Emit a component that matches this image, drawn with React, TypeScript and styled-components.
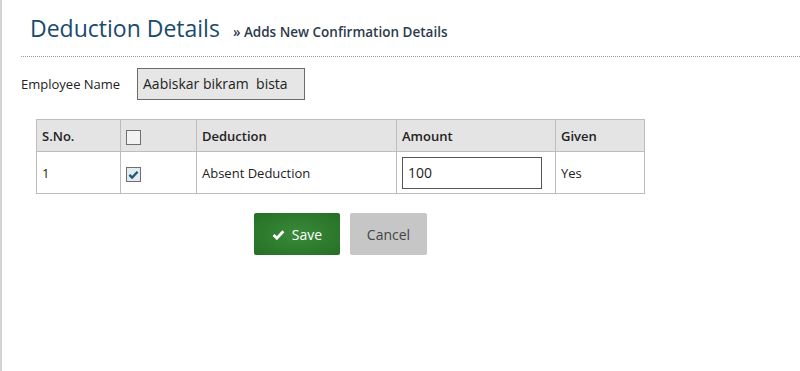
import React from "react";
import styled, { createGlobalStyle } from "styled-components";

const Global = createGlobalStyle`
  html, body { margin: 0; padding: 0; background: #fff; }
  body { font-family: "Open Sans", "Liberation Sans", sans-serif; color: #222; }
`;

const Page = styled.div`
  width: 800px;
  height: 371px;
  box-sizing: border-box;
  border-left: 2px solid #d4d4d4;
  padding: 13px 0 0 19px;
  overflow: hidden;
`;

const Header = styled.div`
  display: flex;
  align-items: baseline;
  gap: 13px;
  padding-left: 9px;
  height: 30px;
`;

const Title = styled.h1`
  margin: 0;
  font-size: 23px;
  font-weight: 400;
  color: #184b6e;
  line-height: 30px;
`;

const Sub = styled.span`
  font-size: 13.5px;
  font-weight: 600;
  color: #2d3a4b;
`;

const Divider = styled.div`
  margin-top: 13px;
  border-top: 1px dotted #9a9a9a;
`;

const FieldRow = styled.div`
  display: flex;
  align-items: center;
  margin-top: 11px;
`;

const Label = styled.label`
  font-size: 13px;
  width: 116px;
  color: #222;
`;

const NameBox = styled.div`
  width: 168px;
  height: 32px;
  box-sizing: border-box;
  background: #e6e6e6;
  border: 1px solid #6b6b6b;
  padding: 0 5px;
  font-size: 14px;
  line-height: 30px;
  color: #222;
  white-space: pre;
`;

const Table = styled.table`
  margin: 19px 0 0 15px;
  border-collapse: collapse;
  font-size: 13px;
`;

const Th = styled.th<{ w: number }>`
  width: ${(p) => p.w}px;
  height: 32px;
  box-sizing: border-box;
  background: #e4e4e4;
  border: 1px solid #bdbdbd;
  text-align: left;
  padding: 0 5px;
  font-weight: 600;
  color: #222;
`;

const Td = styled.td`
  height: 42px;
  box-sizing: border-box;
  border: 1px solid #bdbdbd;
  padding: 0 5px;
  color: #222;
`;

const Check = styled.span<{ checked?: boolean }>`
  display: inline-flex;
  align-items: center;
  justify-content: center;
  width: 15px;
  height: 15px;
  box-sizing: border-box;
  border: 1px solid #6e6e6e;
  background: ${(p) => (p.checked ? "#e3eaf0" : "#f2f2f2")};
  vertical-align: middle;
`;

const AmountInput = styled.div`
  width: 140px;
  height: 32px;
  box-sizing: border-box;
  border: 1px solid #555;
  background: #fff;
  font-size: 14px;
  line-height: 30px;
  padding: 0 5px;
`;

const Actions = styled.div`
  display: flex;
  gap: 10px;
  margin: 19px 0 0 233px;
`;

const Button = styled.button<{ variant: "save" | "cancel" }>`
  height: 42px;
  border: none;
  border-radius: 2px;
  font-family: "Open Sans", "Liberation Sans", sans-serif;
  font-size: 14px;
  display: inline-flex;
  align-items: center;
  justify-content: center;
  gap: 7px;
  padding: 0;
  width: ${(p) => (p.variant === "save" ? 86 : 77)}px;
  color: ${(p) => (p.variant === "save" ? "#fff" : "#444")};
  background: ${(p) =>
    p.variant === "save"
      ? "radial-gradient(ellipse at center, #3a8a3a 0%, #2d7a2d 60%, #266f26 100%)"
      : "#c6c6c6"};
`;

const CheckMark = ({ color, size }: { color: string; size: number }) => (
  <svg width={size} height={size} viewBox="0 0 16 16">
    <path d="M2 8.5 L6 12.5 L14 4" fill="none" stroke={color} strokeWidth={3.4} strokeLinecap="butt" strokeLinejoin="miter" />
  </svg>
);

export default function App() {
  return (
    <>
      <Global />
      <Page>
        <Header>
          <Title>Deduction Details</Title>
          <Sub>» Adds New Confirmation Details</Sub>
        </Header>
        <Divider />
        <FieldRow>
          <Label>Employee Name</Label>
          <NameBox>{"Aabiskar bikram  bista"}</NameBox>
        </FieldRow>
        <Table>
          <thead>
            <tr>
              <Th w={84}>S.No.</Th>
              <Th w={76}>
                <Check />
              </Th>
              <Th w={200}>Deduction</Th>
              <Th w={159}>Amount</Th>
              <Th w={89}>Given</Th>
            </tr>
          </thead>
          <tbody>
            <tr>
              <Td>1</Td>
              <Td>
                <Check checked>
                  <CheckMark color="#1d5a7a" size={11} />
                </Check>
              </Td>
              <Td>Absent Deduction</Td>
              <Td>
                <AmountInput>100</AmountInput>
              </Td>
              <Td>Yes</Td>
            </tr>
          </tbody>
        </Table>
        <Actions>
          <Button variant="save">
            <CheckMark color="#fff" size={13} />
            Save
          </Button>
          <Button variant="cancel">Cancel</Button>
        </Actions>
      </Page>
    </>
  );
}
